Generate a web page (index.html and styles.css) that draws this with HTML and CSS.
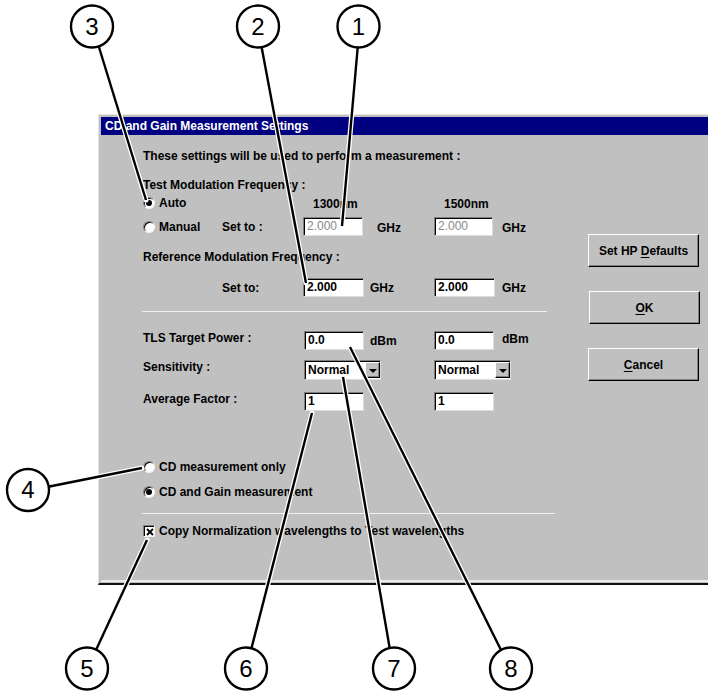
FILE: index.html
```html
<!DOCTYPE html>
<html>
<head>
<meta charset="utf-8">
<link rel="stylesheet" href="styles.css">
</head>
<body>
<div class="stage">
  <div class="dialog">
    <div class="titlebar">CD and Gain Measurement Settings</div>
    <div class="client">
      <div class="form">
        <div class="text-row intro">These settings will be used to perform a measurement :</div>
        <div class="text-row gap-13">Test Modulation Frequency :</div>
        <div class="field-row h16 gap-1">
          <div class="opt"><span class="radio on"></span>Auto</div>
          <div></div>
          <div class="colhead">1300nm</div>
          <div class="colhead">1500nm</div>
        </div>
        <div class="field-row gap-7">
          <div class="opt"><span class="radio"></span>Manual</div>
          <div class="lbl-set">Set to :</div>
          <div class="cell"><span class="input disabled">2.000</span><span class="unit u-wide">GHz</span></div>
          <div class="cell"><span class="input disabled narrow">2.000</span><span class="unit u-col2">GHz</span></div>
        </div>
        <div class="text-row gap-13">Reference Modulation Frequency :</div>
        <div class="field-row gap-13">
          <div></div>
          <div class="lbl-set">Set to:</div>
          <div class="cell"><span class="input wide">2.000</span><span class="unit u-tight">GHz</span></div>
          <div class="cell"><span class="input wide">2.000</span><span class="unit u-col2b">GHz</span></div>
        </div>
        <div class="separator sep-1"></div>
        <div class="field-row gap-19">
          <div class="span2 lbl-top">TLS Target Power :</div>
          <div class="cell shift"><span class="input">0.0</span><span class="unit u-tight">dBm</span></div>
          <div class="cell"><span class="input">0.0</span><span class="unit u-dbm2">dBm</span></div>
        </div>
        <div class="field-row gap-10 h20">
          <div class="span2 lbl-top">Sensitivity :</div>
          <div class="cell shift">
            <span class="select"><span class="val">Normal</span><span class="arrow"><span class="tri"></span></span></span>
          </div>
          <div class="cell">
            <span class="select"><span class="val">Normal</span><span class="arrow"><span class="tri"></span></span></span>
          </div>
        </div>
        <div class="field-row gap-12">
          <div class="span2 lbl-top">Average Factor :</div>
          <div class="cell shift"><span class="input">1</span></div>
          <div class="cell"><span class="input">1</span></div>
        </div>
        <div class="text-row gap-48 opt"><span class="radio"></span>CD measurement only</div>
        <div class="text-row gap-9 opt"><span class="radio on"></span>CD and Gain measurement</div>
        <div class="separator sep-2"></div>
        <div class="text-row gap-9 opt"><span class="check"><svg width="8" height="8" viewBox="0 0 8 8"><path d="M1 1L7 7M7 1L1 7" stroke="#000" stroke-width="1.8"/></svg></span><span>Copy Normalization wavelengths to Test wavelengths</span></div>
      </div>
      <div class="buttons">
        <div class="btn"><span>Set HP <u>D</u>efaults</span></div>
        <div class="btn btn-ok"><span><u>O</u>K</span></div>
        <div class="btn"><span><u>C</u>ancel</span></div>
      </div>
    </div>
  </div>

  <svg class="callouts" width="708" height="692" viewBox="0 0 708 692">
    <g stroke="#fff" stroke-width="5" stroke-linecap="round">
      <line x1="98" y1="44" x2="146" y2="200"/>
      <line x1="261" y1="44" x2="306" y2="283"/>
      <line x1="358" y1="44" x2="342" y2="226"/>
      <line x1="47" y1="487" x2="142" y2="468"/>
      <line x1="96" y1="650" x2="147" y2="540"/>
      <line x1="251" y1="650" x2="312" y2="413"/>
      <line x1="390" y1="650" x2="343" y2="377"/>
      <line x1="501" y1="650" x2="350" y2="347"/>
    </g>
    <g stroke="#000" stroke-width="2.4">
      <line x1="98" y1="44" x2="146" y2="200"/>
      <line x1="261" y1="44" x2="306" y2="283"/>
      <line x1="358" y1="44" x2="342" y2="226"/>
      <line x1="47" y1="487" x2="142" y2="468"/>
      <line x1="96" y1="650" x2="147" y2="540"/>
      <line x1="251" y1="650" x2="312" y2="413"/>
      <line x1="390" y1="650" x2="343" y2="377"/>
      <line x1="501" y1="650" x2="350" y2="347"/>
    </g>
    <g fill="#fff" stroke="#000" stroke-width="2.4">
      <circle cx="358.5" cy="26.5" r="21"/>
      <circle cx="258" cy="26.5" r="21"/>
      <circle cx="92" cy="26.5" r="21"/>
      <circle cx="28" cy="490" r="21"/>
      <circle cx="87" cy="668.5" r="21"/>
      <circle cx="246" cy="668.5" r="21"/>
      <circle cx="394" cy="668.5" r="21"/>
      <circle cx="511" cy="668.5" r="21"/>
    </g>
    <g class="num">
      <text x="358.5" y="35">1</text>
      <text x="258" y="35">2</text>
      <text x="92" y="35">3</text>
      <text x="28" y="498">4</text>
      <text x="87" y="676.5">5</text>
      <text x="246" y="676.5">6</text>
      <text x="394" y="676.5">7</text>
      <text x="511" y="676.5">8</text>
    </g>
  </svg>
</div>
</body>
</html>
```
FILE: styles.css
```css
html, body {
  margin: 0;
  padding: 0;
  background: #fff;
  overflow: hidden;
}
body {
  font-family: "Liberation Sans", Arial, sans-serif;
  font-size: 12px;
  font-weight: bold;
  color: #000;
}
.stage {
  position: relative;
  width: 708px;
  height: 692px;
  overflow: hidden;
  padding: 114px 0 0 98px;
  box-sizing: border-box;
}
.dialog {
  width: 640px;
  background: #c0c0c0;
  border-top: 1px solid #e4e4e4;
  border-left: 1px solid #e4e4e4;
  border-bottom: 2px solid #111;
  padding: 2px 0 1px 2px;
}
.titlebar {
  height: 18px;
  line-height: 18px;
  background: #000080;
  color: #fff;
  padding-left: 4px;
  white-space: nowrap;
}
.client {
  display: flex;
  height: 445px;
  border-bottom: 2px solid #ececec;
}
.form {
  width: 487px;
  padding: 13px 0 0 42px;
  box-sizing: border-box;
  display: flex;
  flex-direction: column;
}
.text-row {
  height: 16px;
  line-height: 16px;
  white-space: nowrap;
}
.gap-1 { margin-top: 1px; }
.gap-7 { margin-top: 7px; }
.gap-9 { margin-top: 9px; }
.gap-10 { margin-top: 10px; }
.gap-12 { margin-top: 12px; }
.gap-13 { margin-top: 13px; }
.gap-19 { margin-top: 19px; }
.gap-48 { margin-top: 48px; }

.field-row {
  display: grid;
  grid-template-columns: 79px 81px 131px 1fr;
  height: 19px;
  align-items: center;
  white-space: nowrap;
}
.field-row.h16 { height: 16px; }
.field-row.h20 { height: 20px; }
.span2 { grid-column: span 2; }
.lbl-top { align-self: start; line-height: 16px; margin-top: -1px; }
.colhead { padding: 3px 0 0 10px; }
.opt {
  display: flex;
  align-items: center;
  line-height: 16px;
}
.lbl-set { line-height: 16px; }
.cell {
  display: flex;
  align-items: center;
}
.cell.shift { margin-left: 1px; }

.input {
  display: block;
  width: 60px;
  height: 19px;
  box-sizing: border-box;
  background: #fff;
  border-style: solid;
  border-width: 1px;
  border-color: #808080 #dcdcdc #dcdcdc #808080;
  box-shadow: inset 1px 1px 0 #000;
  padding: 0 0 0 3px;
  line-height: 17px;
  font-weight: bold;
}
.input.narrow { width: 59px; }
.input.wide { width: 61px; }
.input.disabled {
  color: #8a8a8a;
  font-weight: normal;
}
.unit { line-height: 16px; }
.u-wide { margin-left: 14px; margin-top: 2px; }
.u-tight { margin-left: 6px; }
.u-col2 { margin-left: 9px; margin-top: 2px; }
.u-col2b { margin-left: 7px; }
.u-dbm2 { margin-left: 8px; margin-top: -3px; }

.select {
  display: flex;
  width: 77px;
  height: 20px;
  box-sizing: border-box;
  background: #fff;
  border-style: solid;
  border-width: 1px;
  border-color: #808080 #dcdcdc #dcdcdc #808080;
  box-shadow: inset 1px 1px 0 #000;
  padding: 1px 0 0 1px;
}
.select .val {
  flex: 1;
  padding-left: 2px;
  line-height: 17px;
}
.select .arrow {
  width: 15px;
  height: 16px;
  box-sizing: border-box;
  background: #c0c0c0;
  border-style: solid;
  border-width: 1px;
  border-color: #fff #000 #000 #fff;
  box-shadow: inset -1px -1px 0 #808080;
  display: flex;
  align-items: center;
  justify-content: center;
}
.tri {
  width: 0;
  height: 0;
  border-left: 4px solid transparent;
  border-right: 4px solid transparent;
  border-top: 4px solid #000;
  margin-top: 1px;
}

.radio {
  position: relative;
  width: 12px;
  height: 12px;
  box-sizing: border-box;
  border-radius: 50%;
  background: #fff;
  border: 1px solid;
  border-color: #808080 #f4f4f4 #f4f4f4 #808080;
  box-shadow: inset 1px 1px 0 #000;
  margin-right: 4px;
  flex: none;
}
.radio.on::after {
  content: "";
  position: absolute;
  left: 2px;
  top: 2px;
  width: 6px;
  height: 6px;
  border-radius: 50%;
  background: #000;
}
.check {
  width: 12px;
  height: 12px;
  box-sizing: border-box;
  background: #fff;
  border: 1px solid;
  border-color: #808080 #f4f4f4 #f4f4f4 #808080;
  box-shadow: inset 1px 1px 0 #000;
  margin-right: 4px;
  display: flex;
  align-items: center;
  justify-content: center;
  padding: 1px 0 0 1px;
  flex: none;
}
.check svg { display: block; }

.separator {
  height: 1px;
  background: #f2f2f2;
  margin-left: -1px;
}
.sep-1 { width: 405px; margin-top: 14px; }
.sep-2 { width: 413px; margin-top: 13px; }

.buttons {
  display: flex;
  flex-direction: column;
  gap: 24px;
  padding-top: 99px;
}
.btn {
  width: 111px;
  height: 33px;
  box-sizing: border-box;
  border-style: solid;
  border-width: 1px;
  border-color: #fff #000 #000 #fff;
  box-shadow: inset -1px -1px 0 #808080;
  display: flex;
  align-items: center;
  justify-content: center;
  white-space: nowrap;
}
.btn-ok { margin-left: 1px; }
.btn u { text-decoration-thickness: 1px; text-underline-offset: 2px; }

.callouts {
  position: absolute;
  left: 0;
  top: 0;
  pointer-events: none;
}
.num text {
  font-family: "Liberation Sans", Arial, sans-serif;
  font-weight: normal;
  font-size: 24px;
  text-anchor: middle;
  fill: #000;
}
```
